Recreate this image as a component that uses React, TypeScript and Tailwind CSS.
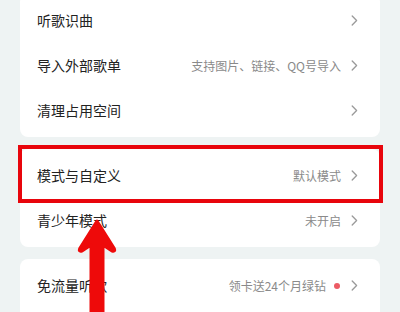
import React from 'react'

type Row = { title: string; value?: string; dot?: boolean; highlight?: boolean }

const font = { fontFamily: '"Noto Sans CJK SC", "Noto Sans", sans-serif' }

function Chevron() {
  return (
    <svg width="7" height="11" viewBox="0 0 7 11" className="shrink-0">
      <path d="M1.2 1 L5.6 5.5 L1.2 10" fill="none" stroke="#9a9a9a" strokeWidth="1.3" strokeLinecap="round" strokeLinejoin="round" />
    </svg>
  )
}

function SettingRow({ row }: { row: Row }) {
  return (
    <div className="relative flex h-[45px] items-center justify-between pl-[17px] pr-[22px]">
      <span className="text-[14px] text-[#222]">{row.title}</span>
      <div className="flex items-center">
        {row.value && <span className="mr-[10px] text-[12px] text-[#8a8a8a]">{row.value}</span>}
        {row.dot && <span className="mr-[11px] -ml-[2px] h-[6px] w-[6px] rounded-full bg-[#ec5b64]" />}
        <Chevron />
      </div>
      {row.highlight && (
        <div className="pointer-events-none absolute -left-[2px] -right-[3px] -top-[8px] -bottom-[5px] border-[4px] border-[#e8050c]" />
      )}
    </div>
  )
}

function Card({ rows, className = '' }: { rows: Row[]; className?: string }) {
  return (
    <div className={`rounded-[8px] bg-white py-1 ${className}`}>
      {rows.map((r) => (
        <SettingRow key={r.title} row={r} />
      ))}
    </div>
  )
}

export default function App() {
  return (
    <div className="relative h-[312px] w-[400px] overflow-hidden bg-[#eef3f3]" style={font}>
      <div className="flex flex-col gap-[12px] px-[20px]">
        <Card
          className="-mt-[6px]"
          rows={[
            { title: '听歌识曲' },
            { title: '导入外部歌单', value: '支持图片、链接、QQ号导入' },
            { title: '清理占用空间' },
          ]}
        />
        <Card
          rows={[
            { title: '模式与自定义', value: '默认模式', highlight: true },
            { title: '青少年模式', value: '未开启' },
          ]}
        />
        <Card className="pb-[30px]" rows={[{ title: '免流量听歌', value: '领卡送24个月绿钻', dot: true }]} />
      </div>
      <svg className="pointer-events-none absolute left-[74px] top-[216px]" width="46" height="96" viewBox="0 0 46 96">
        <path
          d="M23 5 L40 32 Q42 36 38 35 L29 29 L29 96 L17 96 L17 29 L8 35 Q4 36 6 32 Z"
          fill="#ee0a0a"
          stroke="#ee0a0a"
          strokeWidth="3"
          strokeLinejoin="round"
        />
      </svg>
    </div>
  )
}
